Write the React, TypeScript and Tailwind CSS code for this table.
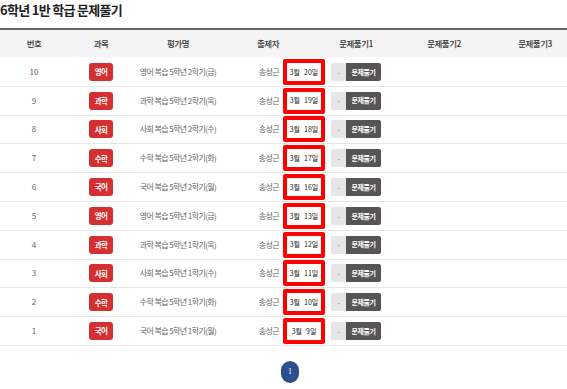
const font = "font-['Noto_Sans_CJK_KR','Noto_Sans',sans-serif]";

interface Row {
  no: number;
  subject: string;
  title: string;
  author: string;
  month: string;
  day: string;
}

const subjectColor = "bg-[#d3302f]";

const rows: Row[] = [
  { no: 10, subject: "영어", title: "영어 복습 5학년 2학기(금)", author: "송성근", month: "3월", day: "20일" },
  { no: 9, subject: "과학", title: "과학 복습 5학년 2학기(목)", author: "송성근", month: "3월", day: "19일" },
  { no: 8, subject: "사회", title: "사회 복습 5학년 2학기(수)", author: "송성근", month: "3월", day: "18일" },
  { no: 7, subject: "수학", title: "수학 복습 5학년 2학기(화)", author: "송성근", month: "3월", day: "17일" },
  { no: 6, subject: "국어", title: "국어 복습 5학년 2학기(월)", author: "송성근", month: "3월", day: "16일" },
  { no: 5, subject: "영어", title: "영어 복습 5학년 1학기(금)", author: "송성근", month: "3월", day: "13일" },
  { no: 4, subject: "과학", title: "과학 복습 5학년 1학기(목)", author: "송성근", month: "3월", day: "12일" },
  { no: 3, subject: "사회", title: "사회 복습 5학년 1학기(수)", author: "송성근", month: "3월", day: "11일" },
  { no: 2, subject: "수학", title: "수학 복습 5학년 1학기(화)", author: "송성근", month: "3월", day: "10일" },
  { no: 1, subject: "국어", title: "국어 복습 5학년 1학기(월)", author: "송성근", month: "3월", day: "9일" },
];

export default function App() {
  return (
    <div className={`w-[567px] h-[389px] bg-white overflow-hidden ${font}`}>
      {/* title */}
      <div className="h-[28px] pt-[1px]">
        <h1 className="text-[13px] leading-[18px] font-bold tracking-[-0.7px] text-[#222]">
          6학년 1반 학급 문제풀기
        </h1>
      </div>

      {/* table header */}
      <div className="border-t-2 border-[#666] bg-[#f4f4f4] h-[29px] flex items-center text-[8.5px] font-medium tracking-[-0.5px] text-[#333]">
        <div className="w-[68px] text-center">번호</div>
        <div className="w-[66px] text-center">과목</div>
        <div className="w-[88px] text-center">평가명</div>
        <div className="w-[61px] text-right pr-[4px]">출제자</div>
        <div className="w-[44px]" />
        <div className="w-[58px] text-center">문제풀기1</div>
        <div className="w-[118px] text-center">문제풀기2</div>
        <div className="w-[64px] text-center">문제풀기3</div>
      </div>

      {/* rows */}
      <div className="pt-[1px]">
        {rows.map((row) => (
          <div
            key={row.no}
            className="h-[28.8px] flex items-center border-b border-[#e6e6e6] text-[8px] tracking-[-0.6px] text-[#666]"
          >
            <div className="w-[68px] text-center tracking-normal">{row.no}</div>
            <div className="w-[66px] flex justify-center">
              <span className={`${subjectColor} w-[24px] h-[18px] rounded-[3px] flex items-center justify-center text-white font-bold text-[7.5px]`}>
                {row.subject}
              </span>
            </div>
            <div className="w-[88px] text-center whitespace-nowrap">{row.title}</div>
            <div className="w-[61px] text-right pr-[4px]">{row.author}</div>
            <div className="w-[44px]">
              <div className="w-[42px] h-[26px] border-[4px] border-[#ff0000] rounded-[2px] bg-white flex items-center justify-center gap-[4px] text-[7px] tracking-normal text-[#222]">
                <span>{row.month}</span>
                <span>{row.day}</span>
              </div>
            </div>
            <div className="w-[58px] flex justify-center">
              <div className="flex h-[18px]">
                <span className="w-[15px] bg-[#e6e6e6] rounded-l-[2px] flex items-center justify-center text-[#888] text-[7px]">-</span>
                <span className="w-[35px] bg-[#555] rounded-r-[2px] flex items-center justify-center text-white font-bold text-[7px] tracking-[-0.5px]">
                  문제풀기
                </span>
              </div>
            </div>
            <div className="w-[118px]" />
            <div className="w-[64px]" />
          </div>
        ))}
      </div>

      {/* pagination */}
      <div className="flex justify-center pt-[15px] pl-[13px]">
        <span className="w-[18px] h-[22px] rounded-full bg-[#2e4f8e] text-white text-[8px] flex items-center justify-center font-['Liberation_Serif',serif]">
          1
        </span>
      </div>
    </div>
  );
}
